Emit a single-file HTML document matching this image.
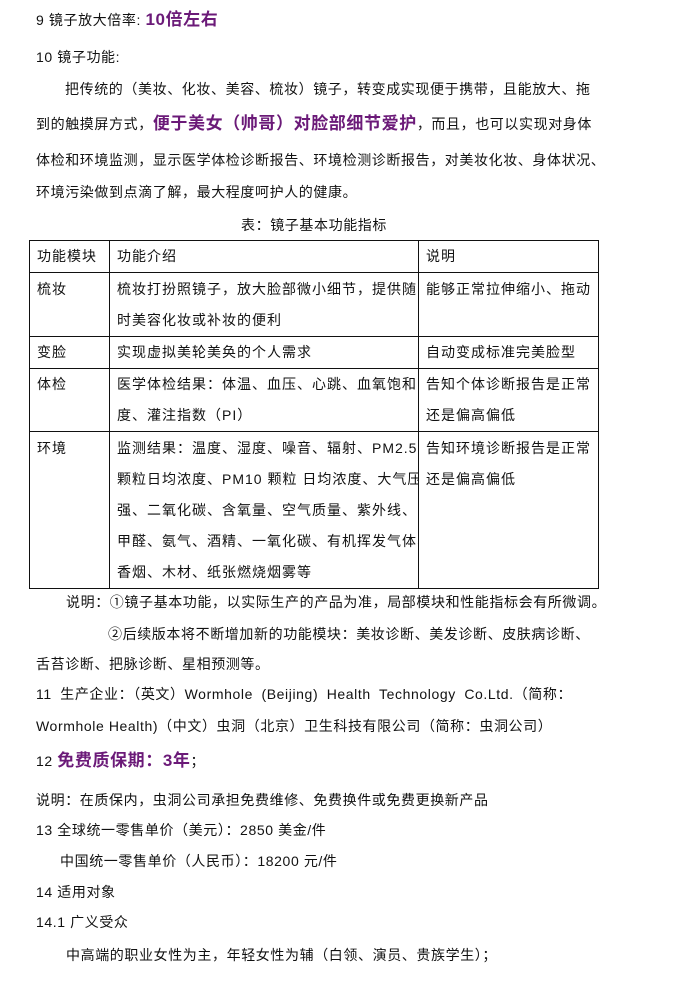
<!DOCTYPE html>
<html><head><meta charset="utf-8"><style>
body{margin:0;width:674px;height:984px;background:#fff;position:relative;overflow:hidden;font-family:"Liberation Sans","Noto Sans CJK SC","WenQuanYi Zen Hei",sans-serif;color:#111;font-size:14px}
.l{position:absolute;white-space:nowrap;letter-spacing:0.6px;line-height:20px}
.p{color:#6b1a78;font-weight:bold;font-size:17px}
table{position:absolute;left:29px;top:240px;border-collapse:collapse;width:570px;table-layout:fixed}
td{border:1.5px solid #111;vertical-align:top;padding:1px 0 0 7px;font-size:14px;letter-spacing:1px;line-height:31px;overflow:hidden;white-space:nowrap}
</style></head><body>
<div class="l" style="left:36px;top:10px">9 镜子放大倍率: <span class="p">10倍左右</span></div>
<div class="l" style="left:36px;top:47px">10 镜子功能:</div>
<div class="l" style="left:65px;top:79px">把传统的（美妆、化妆、美容、梳妆）镜子，转变成实现便于携带，且能放大、拖</div>
<div class="l" style="left:36px;top:114px">到的触摸屏方式，<span class="p">便于美女（帅哥）对脸部细节爱护</span>，而且，也可以实现对身体</div>
<div class="l" style="left:36px;top:150px">体检和环境监测，显示医学体检诊断报告、环境检测诊断报告，对美妆化妆、身体状况、</div>
<div class="l" style="left:36px;top:182px">环境污染做到点滴了解，最大程度呵护人的健康。</div>
<div class="l" style="left:241px;top:215px">表：镜子基本功能指标</div>
<table>
<colgroup><col style="width:80px"><col style="width:309px"><col></colgroup>
<tr style="height:31px"><td style="padding-top:0">功能模块</td><td style="padding-top:0">功能介绍</td><td style="padding-top:0">说明</td></tr>
<tr style="height:63px"><td>梳妆</td><td>梳妆打扮照镜子，放大脸部微小细节，提供随<br>时美容化妆或补妆的便利</td><td>能够正常拉伸缩小、拖动</td></tr>
<tr style="height:32px"><td style="padding-top:0">变脸</td><td style="padding-top:0">实现虚拟美轮美奂的个人需求</td><td style="padding-top:0">自动变成标准完美脸型</td></tr>
<tr style="height:62px"><td style="padding-top:0">体检</td><td style="padding-top:0">医学体检结果：体温、血压、心跳、血氧饱和<br>度、灌注指数（PI）</td><td style="padding-top:0">告知个体诊断报告是正常<br>还是偏高偏低</td></tr>
<tr style="height:156px"><td>环境</td><td>监测结果：温度、湿度、噪音、辐射、PM2.5<br>颗粒日均浓度、PM10 颗粒 日均浓度、大气压<br>强、二氧化碳、含氧量、空气质量、紫外线、<br>甲醛、氨气、酒精、一氧化碳、有机挥发气体、<br>香烟、木材、纸张燃烧烟雾等</td><td>告知环境诊断报告是正常<br>还是偏高偏低</td></tr>
</table>
<div class="l" style="left:66px;top:592px">说明：①镜子基本功能，以实际生产的产品为准，局部模块和性能指标会有所微调。</div>
<div class="l" style="left:108px;top:624px">②后续版本将不断增加新的功能模块：美妆诊断、美发诊断、皮肤病诊断、</div>
<div class="l" style="left:36px;top:654px">舌苔诊断、把脉诊断、星相预测等。</div>
<div class="l" style="left:36px;top:684px;word-spacing:4px">11 生产企业：（英文）Wormhole (Beijing) Health Technology Co.Ltd.（简称：</div>
<div class="l" style="left:36px;top:716px">Wormhole Health)（中文）虫洞（北京）卫生科技有限公司（简称：虫洞公司）</div>
<div class="l" style="left:36px;top:751px">12 <span class="p">免费质保期：3年</span>；</div>
<div class="l" style="left:36px;top:790px">说明：在质保内，虫洞公司承担免费维修、免费换件或免费更换新产品</div>
<div class="l" style="left:36px;top:820px">13 全球统一零售单价（美元）：2850 美金/件</div>
<div class="l" style="left:60px;top:851px">中国统一零售单价（人民币）：18200 元/件</div>
<div class="l" style="left:36px;top:882px">14 适用对象</div>
<div class="l" style="left:36px;top:912px">14.1 广义受众</div>
<div class="l" style="left:66px;top:945px">中高端的职业女性为主，年轻女性为辅（白领、演员、贵族学生）；</div>
</body></html>
